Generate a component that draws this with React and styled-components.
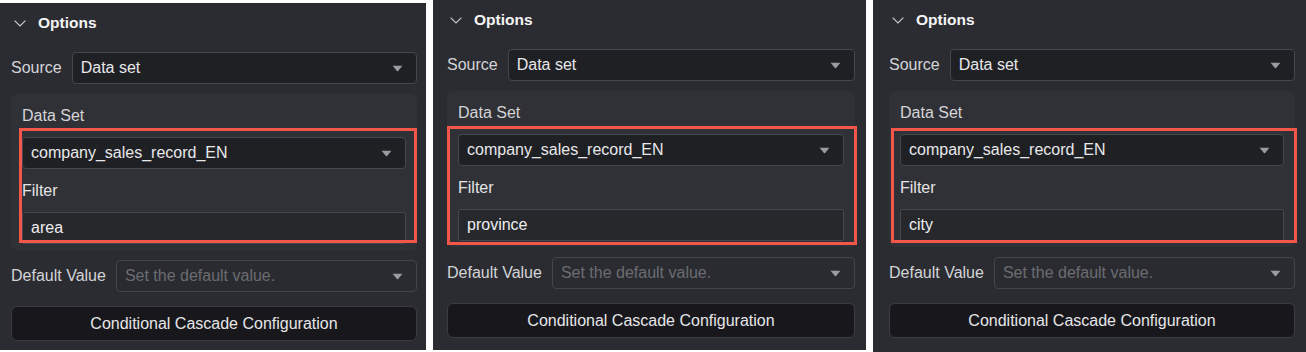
import React from "react";
import styled, { createGlobalStyle } from "styled-components";

const GlobalStyle = createGlobalStyle`
  body {
    margin: 0;
    background: #ffffff;
    font-family: "Liberation Sans", Arial, Helvetica, sans-serif;
  }
`;

// 세 개의 패널 데이터 (필터 값만 다름)
const panels = [
  { filter: "area", width: 426, height: 347, top: 3, inset: 11, padRight: 9, red: { top: 34, left: 8, right: 0, bottom: 7 } },
  { filter: "province", width: 433, height: 350, top: 0, inset: 14, padRight: 11, red: { top: 35, left: 0, right: -2, bottom: 2 } },
  { filter: "city", width: 433, height: 352, top: 0, inset: 16, padRight: 11, red: { top: 37, left: 2, right: -2, bottom: 4 } },
];

const Caret = () => (
  <svg width="11" height="7" viewBox="0 0 11 7">
    <path d="M0.6 0.8 H10.4 L6.1 5.9 Q5.5 6.6 4.9 5.9 Z" fill="#9a9ba1" />
  </svg>
);

const Chevron = () => (
  <svg width="12" height="7" viewBox="0 0 12 7">
    <path d="M0.6 0.6 L6 6 L11.4 0.6" fill="none" stroke="#c9c9cd" strokeWidth="1.2" />
  </svg>
);

const Select = ({ value, placeholder, $tone }) => (
  <SelectBox $tone={$tone}>
    {value ? <SelectText>{value}</SelectText> : <Placeholder>{placeholder}</Placeholder>}
    <Caret />
  </SelectBox>
);

const Panel = ({ p }) => (
  <PanelBox $width={p.width} $height={p.height} $top={p.top} $inset={p.inset} $padRight={p.padRight}>
    <Header>
      <Chevron />
      <HeaderTitle>Options</HeaderTitle>
    </Header>
    <Row>
      <Label>Source</Label>
      <Select value="Data set" $tone="dark" />
    </Row>
    <Group>
      <GroupLabel>Data Set</GroupLabel>
      <Select value="company_sales_record_EN" $tone="dark" />
      <FilterLabel>Filter</FilterLabel>
      <FilterInput>{p.filter}</FilterInput>
      <RedMark $r={p.red} />
    </Group>
    <Row $gapTop={10}>
      <Label>Default Value</Label>
      <Select placeholder="Set the default value." $tone="soft" />
    </Row>
    <CascadeButton>Conditional Cascade Configuration</CascadeButton>
  </PanelBox>
);

const App = () => {
  return (
    <>
      <GlobalStyle />
      <Screens>
        {panels.map((p, idx) => (
          <Panel key={idx} p={p} />
        ))}
      </Screens>
    </>
  );
};

const Screens = styled.div`
  display: flex;
  gap: 7px;
  width: 1306px;
  align-items: flex-start;
`;

const PanelBox = styled.section`
  box-sizing: border-box;
  width: ${(p) => p.$width}px;
  height: ${(p) => p.$height}px;
  margin-top: ${(p) => p.$top}px;
  padding: 0 ${(p) => p.$padRight}px 0 ${(p) => p.$inset}px;
  background: #2b2c31;
  display: flex;
  flex-direction: column;
  flex-shrink: 0;
`;

const Header = styled.div`
  height: 40px;
  display: flex;
  align-items: center;
  gap: 12px;
  padding-left: 3px;
`;

const HeaderTitle = styled.span`
  color: #f4f4f6;
  font-size: 15.5px;
  font-weight: bold;
`;

const Row = styled.div`
  display: flex;
  align-items: center;
  gap: 10px;
  margin-top: ${(p) => p.$gapTop ?? 9}px;
`;

const Label = styled.span`
  color: #d4d4d8;
  font-size: 16px;
  white-space: nowrap;
`;

const SelectBox = styled.div`
  box-sizing: border-box;
  flex: 1;
  height: 32px;
  display: flex;
  align-items: center;
  justify-content: space-between;
  padding: 0 13px 0 8px;
  border: 1px solid ${(p) => (p.$tone === "soft" ? "#44454b" : "#46474d")};
  border-radius: 4px;
  background: ${(p) => (p.$tone === "soft" ? "#2a2b30" : "#1f2024")};
`;

const SelectText = styled.span`
  color: #e8e8eb;
  font-size: 16px;
`;

const Placeholder = styled.span`
  color: #6b6c72;
  font-size: 16px;
`;

const Group = styled.div`
  position: relative;
  margin-top: 10px;
  padding: 11px 11px 6px 11px;
  background: #303136;
  border-radius: 6px;
  display: flex;
  flex-direction: column;

  & > div:nth-child(2) {
    flex: none;
    margin-top: 10px;
  }
`;

const GroupLabel = styled.span`
  color: #d4d4d8;
  font-size: 16px;
  line-height: 22px;
`;

const FilterLabel = styled.span`
  color: #e4e4e7;
  font-size: 16px;
  line-height: 22px;
  margin: 11px 0 10px;
`;

const FilterInput = styled.div`
  box-sizing: border-box;
  height: 32px;
  display: flex;
  align-items: center;
  padding: 0 8px;
  border: 1px solid #46474d;
  border-radius: 2px;
  background: #27282c;
  color: #ededf0;
  font-size: 16px;
`;

// 스크린샷 위의 빨간 주석 박스
const RedMark = styled.div`
  position: absolute;
  top: ${(p) => p.$r.top}px;
  left: ${(p) => p.$r.left}px;
  right: ${(p) => p.$r.right}px;
  bottom: ${(p) => p.$r.bottom}px;
  border: 3px solid #f3574a;
  pointer-events: none;
`;

const CascadeButton = styled.button`
  margin-top: 14px;
  height: 35px;
  border: 1px solid #3b3c42;
  border-radius: 6px;
  background: #18181c;
  color: #e6e6e9;
  font-family: inherit;
  font-size: 16px;
  cursor: pointer;
`;

export default App;
